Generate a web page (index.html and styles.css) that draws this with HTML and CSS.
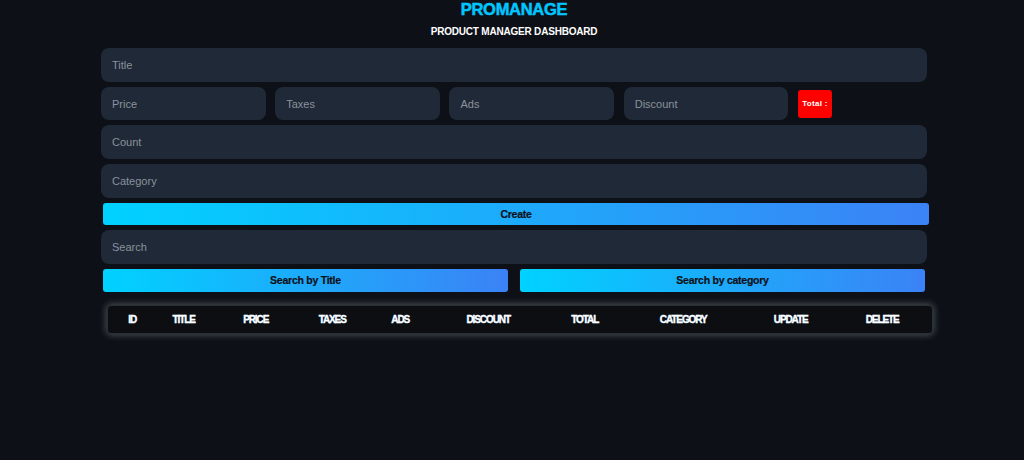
FILE: index.html
```html
<!DOCTYPE html>
<html lang="en">
<head>
<meta charset="utf-8">
<title>PROMANAGE</title>
<link rel="stylesheet" href="styles.css">
</head>
<body>
<div class="app">
  <header class="head">
    <h1 class="brand">PROMANAGE</h1>
    <p class="subtitle">PRODUCT MANAGER DASHBOARD</p>
  </header>
  <div class="form">
    <input class="field" type="text" placeholder="Title">
    <div class="price-row">
      <input class="field small" type="text" placeholder="Price">
      <input class="field small" type="text" placeholder="Taxes">
      <input class="field small" type="text" placeholder="Ads">
      <input class="field small" type="text" placeholder="Discount">
      <small class="total">Total :</small>
    </div>
    <input class="field" type="text" placeholder="Count">
    <input class="field" type="text" placeholder="Category">
    <button class="btn create">Create</button>
    <input class="field" type="text" placeholder="Search">
    <div class="search-row">
      <button class="btn half">Search by Title</button>
      <button class="btn half">Search by category</button>
    </div>
  </div>
  <div class="table-wrap">
    <table class="products">
      <colgroup>
        <col style="width:49px"><col style="width:54px"><col style="width:90px"><col style="width:63px"><col style="width:73px"><col style="width:103px"><col style="width:90px"><col style="width:107px"><col style="width:108px"><col>
      </colgroup>
      <thead>
        <tr>
          <th>ID</th><th>TITLE</th><th>PRICE</th><th>TAXES</th><th>ADS</th><th>DISCOUNT</th><th>TOTAL</th><th>CATEGORY</th><th>UPDATE</th><th class="last">DELETE</th>
        </tr>
      </thead>
      <tbody></tbody>
    </table>
  </div>
</div>
</body>
</html>
```
FILE: styles.css
```css
* { box-sizing: border-box; }
html, body {
  margin: 0;
  padding: 0;
  background: #0d1117;
  height: 100%;
}
body {
  font-family: "Liberation Sans", Arial, sans-serif;
  color: #fff;
}
.app {
  width: 826px;
  margin-left: 101px;
}
.head {
  text-align: center;
}
.brand {
  margin: 0;
  font-size: 16.5px;
  font-weight: 700;
  line-height: 18.4px;
  color: #00c6ff;
  letter-spacing: -0.3px;
  -webkit-text-stroke: 0.5px #00c6ff;
}
.subtitle {
  margin: 7.4px 0 0;
  font-size: 10px;
  line-height: 11.5px;
  font-weight: 700;
  letter-spacing: -0.2px;
  color: #fff;
}
.form {
  margin-top: 10.7px;
  display: flex;
  flex-direction: column;
  gap: 5px;
}
.field {
  display: block;
  width: 826px;
  height: 33.7px;
  border: none;
  outline: none;
  border-radius: 8px;
  background: #1f2937;
  color: #fff;
  font-family: "Liberation Sans", Arial, sans-serif;
  font-size: 11px;
  padding: 0 11px;
}
.field::placeholder {
  color: #8b929c;
}
.price-row {
  display: flex;
  align-items: center;
  gap: 9.55px;
}
.field.small {
  width: 164.7px;
  flex: none;
}
.total {
  display: flex;
  align-items: center;
  justify-content: center;
  width: 34px;
  height: 28px;
  background: #ff0000;
  border-radius: 3px;
  color: #fff;
  font-size: 8px;
  font-weight: 700;
  letter-spacing: 0.3px;
  white-space: nowrap;
}
.btn {
  display: block;
  border: none;
  border-radius: 3px;
  background: linear-gradient(to right, #00d2ff, #3b82f6);
  color: #0d1117;
  font-family: "Liberation Sans", Arial, sans-serif;
  font-size: 10.5px;
  font-weight: 700;
  letter-spacing: -0.25px;
  -webkit-text-stroke: 0.2px #0d1117;
  cursor: pointer;
  padding: 0;
}
.create {
  width: 826px;
  height: 22.3px;
  margin-left: 2px;
}
.search-row {
  display: flex;
  justify-content: space-between;
  padding: 0 2px;
}
.half {
  width: 405px;
  height: 23px;
}
.table-wrap {
  margin: 13.4px 0 0 5.7px;
  width: 826px;
  background: #0c0e12;
  border: 1px solid #2b2e34;
  border-radius: 4px;
  box-shadow: 0 0 7px 1px rgba(190, 195, 205, 0.35);
}
.products {
  width: 100%;
  border-collapse: collapse;
  table-layout: fixed;
}
.products th {
  height: 27px;
  padding: 0;
  text-align: center;
  font-family: "Liberation Sans", Arial, sans-serif;
  font-size: 10px;
  font-weight: 700;
  letter-spacing: -1.1px;
  color: #fff;
  -webkit-text-stroke: 0.3px #fff;
  text-shadow: 0 0 1px #1b5a8a;
}
.products th.last {
  padding-right: 12px;
}
```
